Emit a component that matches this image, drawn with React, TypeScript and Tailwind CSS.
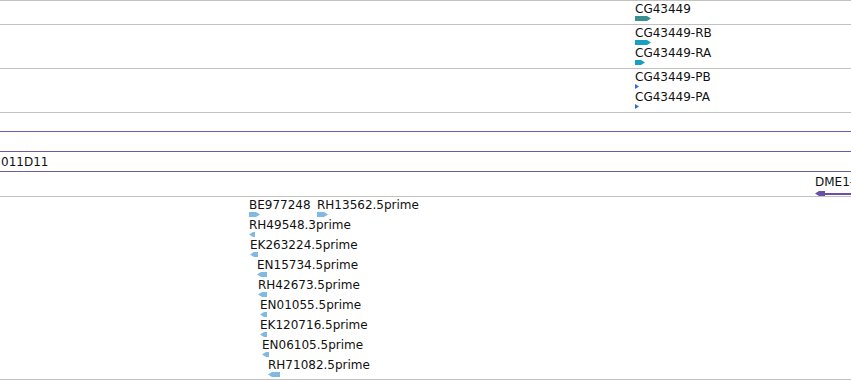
import type { ReactNode } from "react";

type Dir = "right" | "left";

type Feature = {
  label: string;
  start: number;
  width: number;
  dir: Dir;
  color: string;
};

const FONT = "font-['DejaVu_Sans',sans-serif] text-[12px] leading-[12px] text-[#111]";

function Arrow({ width, dir, color }: { width: number; dir: Dir; color: string }) {
  const tip = Math.min(4, width);
  const points =
    dir === "right"
      ? `0,0 ${width - tip},0 ${width},2.5 ${width - tip},5 0,5`
      : `${width},0 ${tip},0 0,2.5 ${tip},5 ${width},5`;

  return (
    <svg className="block" height={5} width={width}>
      <polygon fill={color} points={points} />
    </svg>
  );
}

// one row of a feature track; features sit at their genome position along x
function FeatureRow({ features }: { features: Feature[] }) {
  return (
    <div className="relative h-[20px] shrink-0">
      {features.map((feature) => (
        <div className="absolute top-0 flex flex-col gap-px" key={feature.label} style={{ left: feature.start }}>
          <span className={`${FONT} whitespace-nowrap`}>{feature.label}</span>
          <Arrow color={feature.color} dir={feature.dir} width={feature.width} />
        </div>
      ))}
    </div>
  );
}

function Track({ border, className, children }: { border: string; className: string; children?: ReactNode }) {
  return <div className={`relative flex flex-col overflow-hidden border-t ${border} ${className}`}>{children}</div>;
}

const TEAL = "#3a8f91";
const CYAN = "#16a0c2";
const BLUE = "#356ccf";
const EST = "#82b9e2";

const geneRows: Feature[][] = [[{ label: "CG43449", start: 635, width: 16, dir: "right", color: TEAL }]];

const transcriptRows: Feature[][] = [
  [{ label: "CG43449-RB", start: 635, width: 16, dir: "right", color: CYAN }],
  [{ label: "CG43449-RA", start: 635, width: 10, dir: "right", color: CYAN }],
];

const proteinRows: Feature[][] = [
  [{ label: "CG43449-PB", start: 635, width: 4, dir: "right", color: BLUE }],
  [{ label: "CG43449-PA", start: 635, width: 4, dir: "right", color: BLUE }],
];

const estRows: Feature[][] = [
  [
    { label: "BE977248", start: 249, width: 11, dir: "right", color: EST },
    { label: "RH13562.5prime", start: 317, width: 11, dir: "right", color: EST },
  ],
  [{ label: "RH49548.3prime", start: 249, width: 6, dir: "left", color: EST }],
  [{ label: "EK263224.5prime", start: 250, width: 8, dir: "left", color: EST }],
  [{ label: "EN15734.5prime", start: 257, width: 10, dir: "left", color: EST }],
  [{ label: "RH42673.5prime", start: 258, width: 9, dir: "left", color: EST }],
  [{ label: "EN01055.5prime", start: 260, width: 7, dir: "left", color: EST }],
  [{ label: "EK120716.5prime", start: 260, width: 7, dir: "left", color: EST }],
  [{ label: "EN06105.5prime", start: 262, width: 7, dir: "left", color: EST }],
  [{ label: "RH71082.5prime", start: 268, width: 12, dir: "left", color: EST }],
];

export default function App() {
  const gray = "border-[#c2c2c2]";
  const purple = "border-[#6d5c9e]";

  return (
    <div className="flex h-[380px] w-[851px] flex-col overflow-hidden bg-white">
      <Track border={gray} className="h-[24px] pt-[2px]">
        {geneRows.map((row, i) => (
          <FeatureRow features={row} key={i} />
        ))}
      </Track>
      <Track border={gray} className="h-[44px] pt-[2px]">
        {transcriptRows.map((row, i) => (
          <FeatureRow features={row} key={i} />
        ))}
      </Track>
      <Track border={gray} className="h-[44px] pt-[2px]">
        {proteinRows.map((row, i) => (
          <FeatureRow features={row} key={i} />
        ))}
      </Track>
      <Track border={gray} className="h-[19px]" />
      <Track border={purple} className="h-[20px]" />
      <Track border={purple} className="h-[20px] pl-px pt-[4px]">
        <span className={FONT}>011D11</span>
      </Track>
      <Track border={purple} className="h-[25px] items-end pt-[4px]">
        <div className="flex w-[36px] flex-col gap-[3px]">
          <span className={`${FONT} whitespace-nowrap`}>DME1-</span>
          <div className="flex items-center">
            <Arrow color="#6a4fa6" dir="left" width={10} />
            <div className="h-[2px] flex-1 bg-[#6a4fa6]" />
          </div>
        </div>
      </Track>
      <Track border={gray} className="h-[183px] pt-[2px]">
        {estRows.map((row, i) => (
          <FeatureRow features={row} key={i} />
        ))}
      </Track>
      <div className={`h-px shrink-0 border-t ${gray}`} />
    </div>
  );
}
